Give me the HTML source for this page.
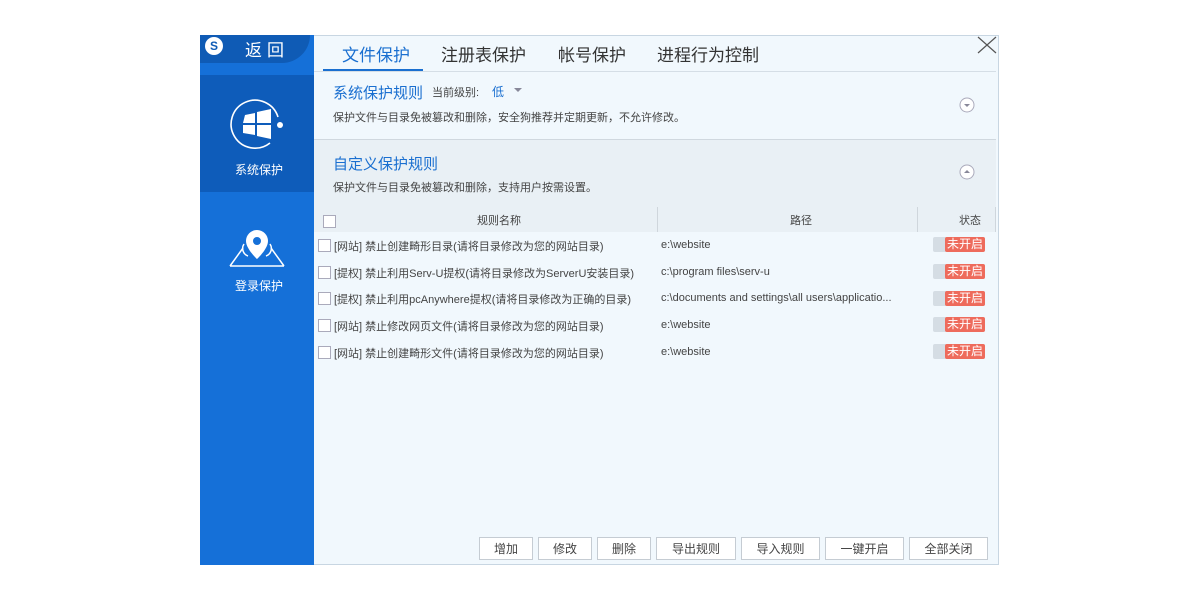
<!DOCTYPE html><html><head><meta charset="utf-8"><style>
body{margin:0;width:1200px;height:600px;background:#fff;position:relative;font-family:"Liberation Sans","Noto Sans CJK SC",sans-serif;overflow:hidden}
.a{position:absolute}
.win{left:200px;top:35px;width:799px;height:530px;background:#f1f8fd;border:1px solid #c8d6e2;box-sizing:border-box}
.side{left:200px;top:35px;width:114px;height:530px;background:#1570d8}
.t{font-size:12px;color:#444;white-space:nowrap}
.cb{width:11px;height:11px;border:1px solid #aab;background:#fff}
.st{left:933px;width:52px;height:15px;background:#d5dde4;border-radius:2px}
.st span{position:absolute;right:0;top:0;width:40px;height:15px;background:#ee6b5c;color:#fff;font-size:12px;line-height:15px;text-align:center;border-radius:2px}
.btn{top:537px;height:23px;border:1px solid #c5ccd3;background:#fff;font-size:12px;color:#444;text-align:center;line-height:23px;box-sizing:border-box}
</style></head><body>
<div class="a win"></div>
<div class="a side"></div>
<div class="a" style="left:200px;top:35px;width:110px;height:28px;background:#0f5bb5;border-radius:0 0 40px 0"></div>
<div class="a" style="left:205px;top:37px;width:18px;height:18px;border-radius:50%;background:#fff;color:#0f5bb5;font-weight:bold;font-size:12px;text-align:center;line-height:18px">S</div>
<div class="a" style="left:245px;top:36px;color:#fff;font-size:17px;letter-spacing:5px">返回</div>
<div class="a" style="left:200px;top:75px;width:114px;height:117px;background:#0e5cba"></div>
<svg class="a" style="left:228px;top:95px" width="58" height="58" viewBox="0 0 58 58"><path d="M50 22A24 24 0 1 0 42 48" fill="none" stroke="#fff" stroke-width="1.6"/><circle cx="52" cy="30" r="3" fill="#fff"/><path d="M17 20l10-2v10h-12zM29 17l14-3v14h-14zM15 30h12v10l-12-2zM29 30h14v14l-14-3z" fill="#fff"/></svg>
<div class="a t" style="left:235px;top:161px;color:#fff">系统保护</div>
<svg class="a" style="left:228px;top:228px" width="58" height="40" viewBox="0 0 58 40"><path d="M2 38L15 20M56 38L43 20M2 38H56" stroke="#fff" stroke-width="1.5" fill="none"/><path d="M29 2a11 11 0 0 1 11 11c0 8-11 18-11 18S18 21 18 13A11 11 0 0 1 29 2z" fill="#fff"/><circle cx="29" cy="13" r="4" fill="#1570d8"/><path d="M16 16a8 8 0 0 0 4 12M42 16a8 8 0 0 1-4 12" stroke="#fff" stroke-width="1.5" fill="none"/></svg>
<div class="a t" style="left:235px;top:277px;color:#fff">登录保护</div>
<div class="a" style="left:342px;top:41px;font-size:17px;color:#1a6fd0">文件保护</div>
<div class="a" style="left:441px;top:41px;font-size:17px;color:#333">注册表保护</div>
<div class="a" style="left:558px;top:41px;font-size:17px;color:#333">帐号保护</div>
<div class="a" style="left:657px;top:41px;font-size:17px;color:#333">进程行为控制</div>
<div class="a" style="left:323px;top:69px;width:100px;height:3px;background:#1a6fd0"></div>
<div class="a" style="left:314px;top:71px;width:682px;height:1px;background:#d5dee6"></div>
<svg class="a" style="left:977px;top:36px" width="20" height="18"><path d="M1 1L19 17M19 1L1 17" stroke="#555" stroke-width="1.2"/></svg>
<div class="a" style="left:333px;top:82px;font-size:15px;color:#1a6fd0">系统保护规则</div>
<div class="a t" style="left:432px;top:84px;font-size:11px">当前级别:</div>
<div class="a t" style="left:492px;top:83px;color:#1a6fd0">低</div>
<div class="a" style="left:514px;top:88px;border:4px solid transparent;border-top:4px solid #889;width:0;height:0"></div>
<div class="a t" style="left:333px;top:109px;font-size:11px">保护文件与目录免被篡改和删除，安全狗推荐并定期更新，不允许修改。</div>
<svg class="a" style="left:959px;top:97px" width="16" height="16"><circle cx="8" cy="8" r="7" fill="#fff" stroke="#aab" /><path d="M5 7h6l-3 3z" fill="#889"/></svg>
<div class="a" style="left:314px;top:139px;width:682px;height:66px;background:#e9f0f5;border-top:1px solid #d0d8df"></div>
<div class="a" style="left:333px;top:153px;font-size:15px;color:#1a6fd0">自定义保护规则</div>
<div class="a t" style="left:333px;top:179px;font-size:11px">保护文件与目录免被篡改和删除，支持用户按需设置。</div>
<svg class="a" style="left:959px;top:164px" width="16" height="16"><circle cx="8" cy="8" r="7" fill="#fff" stroke="#aab"/><path d="M5 9h6l-3-3z" fill="#889"/></svg>
<div class="a" style="left:314px;top:205px;width:682px;height:27px;background:#e9f0f5"></div>
<div class="a cb" style="left:323px;top:215px"></div>
<div class="a t" style="left:477px;top:212px;font-size:11px">规则名称</div>
<div class="a" style="left:657px;top:207px;width:1px;height:25px;background:#cfd6dc"></div>
<div class="a t" style="left:790px;top:212px;font-size:11px">路径</div>
<div class="a" style="left:917px;top:207px;width:1px;height:25px;background:#cfd6dc"></div>
<div class="a t" style="left:959px;top:212px;font-size:11px">状态</div>
<div class="a" style="left:995px;top:207px;width:1px;height:25px;background:#cfd6dc"></div>

<div class="a cb" style="left:318px;top:239px"></div><div class="a t" style="left:334px;top:238px;font-size:11px">[网站] 禁止创建畸形目录(请将目录修改为您的网站目录)</div><div class="a t" style="left:661px;top:239px;font-size:11px">e:\website</div><div class="a st" style="top:237px"><span>未开启</span></div>
<div class="a cb" style="left:318px;top:266px"></div><div class="a t" style="left:334px;top:265px;font-size:11px">[提权] 禁止利用Serv-U提权(请将目录修改为ServerU安装目录)</div><div class="a t" style="left:661px;top:266px;font-size:11px">c:\program files\serv-u</div><div class="a st" style="top:264px"><span>未开启</span></div>
<div class="a cb" style="left:318px;top:292px"></div><div class="a t" style="left:334px;top:291px;font-size:11px">[提权] 禁止利用pcAnywhere提权(请将目录修改为正确的目录)</div><div class="a t" style="left:661px;top:292px;font-size:11px">c:\documents and settings\all users\applicatio...</div><div class="a st" style="top:291px"><span>未开启</span></div>
<div class="a cb" style="left:318px;top:319px"></div><div class="a t" style="left:334px;top:318px;font-size:11px">[网站] 禁止修改网页文件(请将目录修改为您的网站目录)</div><div class="a t" style="left:661px;top:319px;font-size:11px">e:\website</div><div class="a st" style="top:317px"><span>未开启</span></div>
<div class="a cb" style="left:318px;top:346px"></div><div class="a t" style="left:334px;top:345px;font-size:11px">[网站] 禁止创建畸形文件(请将目录修改为您的网站目录)</div><div class="a t" style="left:661px;top:346px;font-size:11px">e:\website</div><div class="a st" style="top:344px"><span>未开启</span></div>

<div class="a btn" style="left:479px;width:54px">增加</div>
<div class="a btn" style="left:538px;width:54px">修改</div>
<div class="a btn" style="left:597px;width:54px">删除</div>
<div class="a btn" style="left:656px;width:80px">导出规则</div>
<div class="a btn" style="left:741px;width:79px">导入规则</div>
<div class="a btn" style="left:825px;width:79px">一键开启</div>
<div class="a btn" style="left:909px;width:79px">全部关闭</div>
</body></html>
